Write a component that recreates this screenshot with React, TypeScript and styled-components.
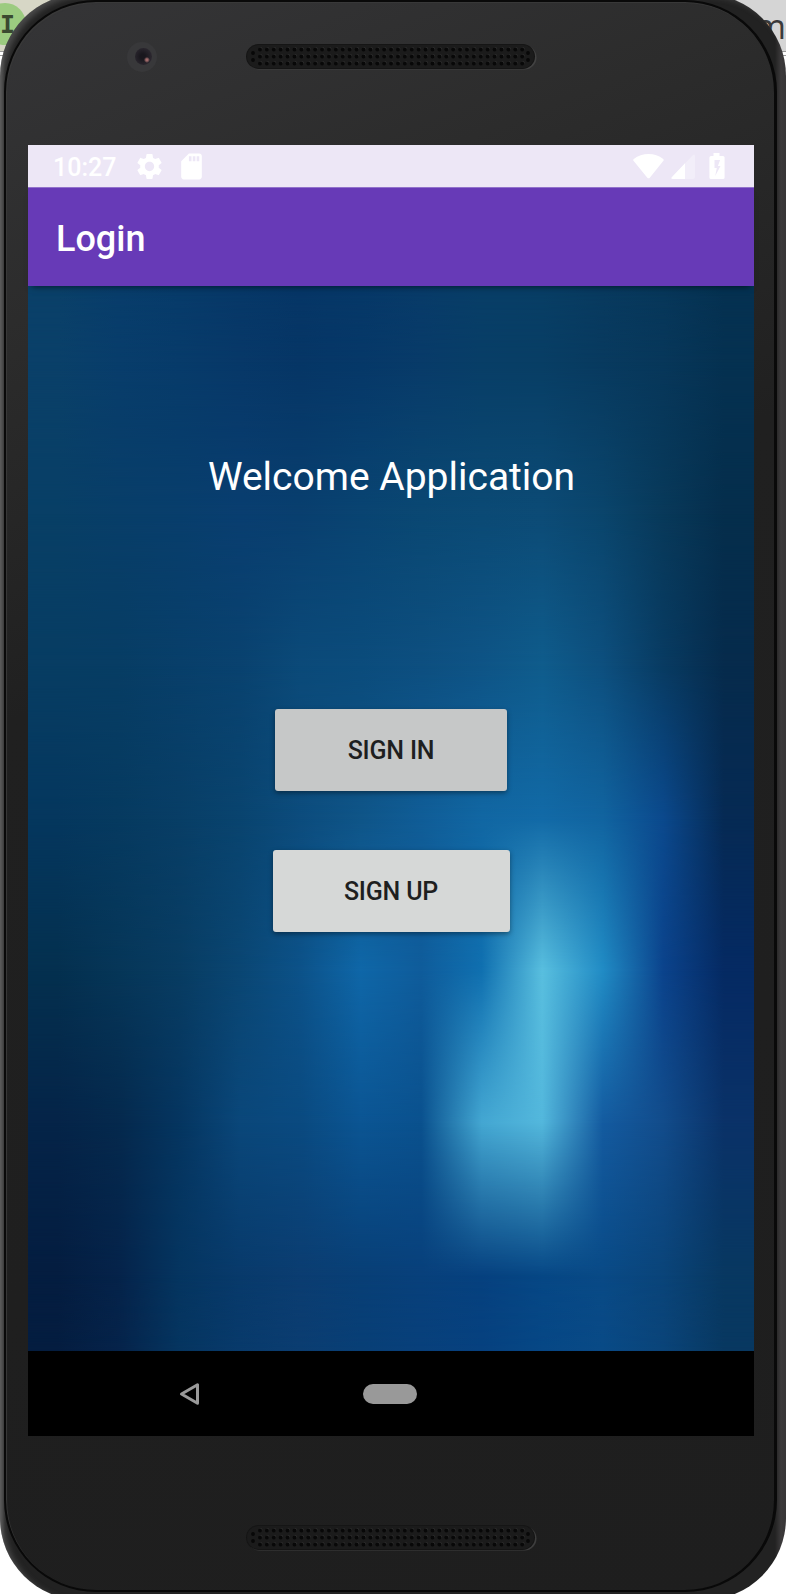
import React from 'react';
import styled, { createGlobalStyle } from 'styled-components';
import { MdSettings, MdSdCard } from 'react-icons/md';

const GlobalStyle = createGlobalStyle`
  * { box-sizing: border-box; }
  body { margin: 0; background: #fff; font-family: Roboto, sans-serif; }
`;

const Page = styled.main`
  position: relative;
  width: 786px;
  height: 1594px;
  overflow: hidden;
  background: #fff;
`;

/* Browser toolbar peeking out behind the phone corners */
const Toolbar = styled.div`
  position: absolute;
  inset: 0 0 auto 0;
  height: 56px;
  display: flex;
  justify-content: space-between;
  background: linear-gradient(#0000 51px, #999 51px, #999 52px, #fff 52px, #fff 55px, #999 55px),
    linear-gradient(90deg, #d7d7c6 50%, #d5d5d5 50%);
`;

const Avatar = styled.span`
  width: 42px;
  height: 42px;
  margin: 3px 0 0 -16px;
  padding-left: 5px;
  border-radius: 50%;
  background: #9ccb80;
  color: #3a4a30;
  font: bold 25px/43px 'DejaVu Sans Mono', monospace;
  text-align: center;
`;

const ToolbarText = styled.span`
  color: #3a3a3a;
  font: 34px/53px 'Open Sans', sans-serif;
`;

const Phone = styled.div`
  position: relative;
  width: 786px;
  height: 1606px;
  margin-top: -6px;
  padding: 6px 9px 8px 4px;
  border-radius: 82px;
  background: linear-gradient(90deg, #444 0, #222 5px, #222 775px, #3c3a3b 781px, #383637 786px);
  box-shadow: inset 5px 3px 6px -1px #8a8a8a66;
`;

const Face = styled.div`
  height: 1592px;
  display: flex;
  flex-direction: column;
  padding: 0 19px 0 22px;
  border: 2px solid #090909;
  border-right-width: 3px;
  border-radius: 92px;
  box-shadow: inset 1px 1px 1px #3a3a3a;
  background: linear-gradient(158deg, #353537 0, #2c2c2c 17%, #202020 38%, #1e1e1e 100%);
`;

const TopBezel = styled.div`
  height: 143px;
  flex: none;
  display: flex;
  align-items: flex-start;
  padding: 40px 0 0 99px;
`;

const Camera = styled.div`
  width: 30px;
  height: 30px;
  padding: 6px 6px 6px 8px;
  border-radius: 50%;
  background: #38383a;
  margin-right: 89px;
`;

const Lens = styled.div`
  width: 17px;
  height: 17px;
  border-radius: 50%;
  background: radial-gradient(circle at 70% 70%, #a06a6a 0 1px, #0000 3px),
    radial-gradient(circle at 45% 50%, #19171d 20%, #2c2830 75%);
`;

const TopSpeaker = styled.div`
  padding-top: 2px;
`;

const Screen = styled.div`
  width: 726px;
  height: 1291px;
  flex: none;
  display: flex;
  flex-direction: column;
`;

const StatusBar = styled.div`
  height: 42px;
  flex: none;
  display: flex;
  align-items: center;
  padding: 0 29px 0 25px;
  background: #ede7f6;
  color: #fff;
  font-size: 25px;
  font-weight: 500;
`;

const Clock = styled.span`
  width: 81px;
  line-height: 42px;
  padding-top: 3px;
`;

const StatusIcons = styled.span`
  display: flex;
  gap: 11px;
  svg { display: block; }
`;

const Indicators = styled.svg`
  display: block;
  margin: 1px 0 0 auto;
`;

const AppBar = styled.header`
  height: 99px;
  flex: none;
  position: relative;
  z-index: 1;
  padding: 0 28px;
  border-top: 1px solid #9272cb;
  background: #673ab7;
  box-shadow: 0 5px 6px -4px #0008;
`;

const Title = styled.h1`
  margin: 0;
  color: #fff;
  font-size: 36px;
  font-weight: 500;
  line-height: 102px;
`;

const Content = styled.section`
  height: 1065px;
  flex: none;
  position: relative;
  display: flex;
  flex-direction: column;
  align-items: center;
`;

const Wallpaper = styled.div`
  position: absolute;
  inset: 0;
  display: flex;
  flex-direction: column;
`;

const Strip = styled.div<{ $from: string; $to: string; $edge?: boolean }>`
  position: relative;
  flex: ${p => (p.$edge ? 1 : 2)} 0 0;
  background: ${p => p.$from};
  &::after {
    content: '';
    position: absolute;
    inset: 0;
    background: ${p => p.$to};
    mask-image: linear-gradient(transparent, #000);
  }
`;

const Welcome = styled.h2`
  position: relative;
  margin: 168px 0 0;
  padding-left: 1px;
  color: #fff;
  font-size: 39px;
  font-weight: 400;
  line-height: 46px;
  white-space: nowrap;
`;

const Actions = styled.div`
  position: relative;
  margin-top: 209px;
  display: flex;
  flex-direction: column;
  align-items: center;
  gap: 59px;
`;

const ActionButton = styled.button<{ $width: number; $pressed?: boolean }>`
  width: ${p => p.$width}px;
  height: 82px;
  padding: 1px 0 0;
  border: 0;
  border-radius: 3px;
  background: ${p => (p.$pressed ? '#c6c8c8' : '#d6d8d7')};
  box-shadow: 0 2px 5px #0006;
  color: #1e1f1f;
  font: 500 25px Roboto, sans-serif;
  letter-spacing: -0.2px;
`;

const NavBar = styled.nav`
  height: 85px;
  flex: none;
  display: flex;
  align-items: center;
  padding-left: 151px;
  background: #000;
`;

const HomePill = styled.span`
  width: 54px;
  height: 20px;
  margin-left: 163px;
  border-radius: 10px;
  background: #999;
`;

const BottomBezel = styled.div`
  flex: 1;
  padding: 89px 0 0 218px;
`;

/* Colour mesh of the wallpaper: one row per control line, twelve stops each */
const mesh = [
  ['0a4069', '083d6b', '073b6a', '073868', '063666', '063868', '083b69', '083e67', '083e65', '083a5f', '07375a', '053151'],
  ['083f66', '083e69', '083e6c', '093e70', '093f6f', '094472', '0a4873', '0b4a75', '0c4b76', '0a456c', '08395a', '052e4c'],
  ['073d63', '073d64', '083f6a', '09426f', '0b4a79', '0b4c7c', '0d4f80', '0e5486', '0f5c8c', '0d4f7e', '083b62', '062b4c'],
  ['05375e', '063a60', '083e66', '09446f', '0c4c7d', '0f5588', '105d97', '1167a3', '126aa7', '1164a0', '0b498d', '062a54'],
  ['04304f', '063658', '083c62', '0a4673', '0c5289', '0f67a8', '0f5c9b', '1070b0', '59bfdf', '218cc5', '0b438c', '052a63'],
  ['052448', '05294d', '053560', '0a477a', '0a4a80', '0b5593', '0a518e', '44a7d2', '53b7dc', '145ba0', '124c8b', '0a3268'],
  ['041d40', '05234a', '053560', '083a6b', '0b3d71', '083f76', '08407b', '06417f', '064785', '094a86', '0a4479', '083861'],
];

const rowGradient = (row: string[]) =>
  `linear-gradient(90deg, ${row.map((c, i) => `#${c} ${((i + 0.5) / 12) * 100}%`).join(', ')})`;

const rows = mesh.map(rowGradient);

const columns = Array.from({ length: 39 }, (_, i) => 14 + i * 6.9);

function Speaker() {
  return (
    <svg width="291" height="26" viewBox="0 0 291 26">
      <rect x="1.5" y="1.5" width="289" height="24" rx="12" fill="#4c4c4c" opacity=".7" />
      <rect x="0" y="0" width="289" height="25" rx="12.5" fill="#151515" />
      <rect x="1" y="1" width="287" height="23" rx="11.5" fill="#1b1b1b" />
      {columns.map(x =>
        [5.5, 12.5, 19.5].map(y => (
          <g key={`${x}-${y}`}>
            <circle cx={x + 0.6} cy={y - 0.8} r="1.8" fill="#303030" />
            <circle cx={x} cy={y} r="1.9" fill="#080808" />
          </g>
        )),
      )}
      {[7, 282].map(x => [9, 16].map(y => <circle key={`${x}-${y}`} cx={x} cy={y} r="1.9" fill="#080808" />))}
    </svg>
  );
}

export default function App() {
  return (
    <Page>
      <GlobalStyle />
      <Toolbar>
        <Avatar>I</Avatar>
        <ToolbarText>m</ToolbarText>
      </Toolbar>
      <Phone>
        <Face>
          <TopBezel>
            <Camera><Lens /></Camera>
            <TopSpeaker><Speaker /></TopSpeaker>
          </TopBezel>
          <Screen>
            <StatusBar>
              <Clock>10:27</Clock>
              <StatusIcons>
                <MdSettings size={31} />
                <MdSdCard size={31} />
              </StatusIcons>
              <Indicators width="92" height="28" viewBox="0 0 92 28" fill="#fff">
                <path d="M.8 6C9-.6 22.200-.6 30.200 6c.6.500.7 1.200.2 1.800L16.800 24.700c-.7.800-1.800.8-2.500 0L.5 7.800C0 7.200.1 6.500.8 6Z" />
                <path d="M62 3v21a2 2 0 0 1-2 2H40c-2 0-2-1-1-2L60 2c1-1 2-.5 2 1Z" opacity=".3" />
                <path d="M52 10.300V26H40c-2 0-2-1-1-2Z" />
                <path fillRule="evenodd" d="M80.500 0h6v3H90a1.600 1.600 0 0 1 1.600 1.600v19.800A1.600 1.600 0 0 1 90 26H78a1.600 1.600 0 0 1-1.600-1.600V4.600A1.600 1.600 0 0 1 78 3h2.500ZM81.500 7v8h2.300l-1.600 8 5.300-10h-2.600l2.200-6Z" />
              </Indicators>
            </StatusBar>
            <AppBar>
              <Title>Login</Title>
            </AppBar>
            <Content>
              <Wallpaper>
                <Strip $from={rows[0]} $to={rows[0]} $edge />
                {rows.slice(1).map((row, i) => (
                  <Strip key={i} $from={rows[i]} $to={row} />
                ))}
                <Strip $from={rows[6]} $to={rows[6]} $edge />
              </Wallpaper>
              <Welcome>Welcome Application</Welcome>
              <Actions>
                <ActionButton $width={232} $pressed>SIGN IN</ActionButton>
                <ActionButton $width={237}>SIGN UP</ActionButton>
              </Actions>
            </Content>
            <NavBar>
              <svg width="21" height="24" viewBox="0 0 21 24" fill="none" stroke="#999" strokeWidth="3" strokeLinejoin="round">
                <path d="M2.500 12 18.500 2.800v18.400Z" />
              </svg>
              <HomePill />
            </NavBar>
          </Screen>
          <BottomBezel>
            <Speaker />
          </BottomBezel>
        </Face>
      </Phone>
    </Page>
  );
}
